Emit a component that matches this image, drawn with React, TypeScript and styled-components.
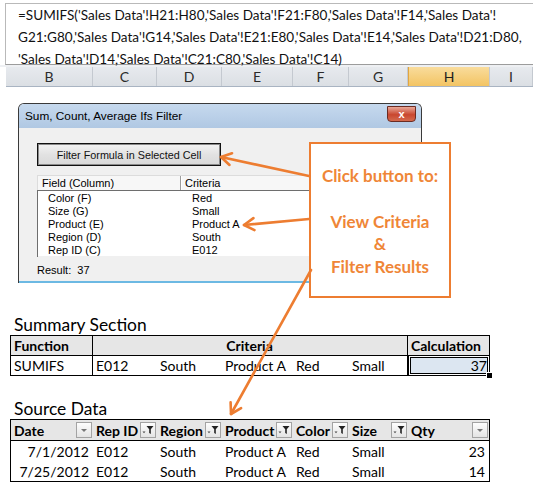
import React from "react";
import styled, { createGlobalStyle } from "styled-components";

const GlobalStyle = createGlobalStyle`
  html, body { margin: 0; padding: 0; background: #fff; }
  body { width: 533px; height: 488px; overflow: hidden; }
  * { box-sizing: border-box; }
`;

const SHEET_FONT = `Lato, "Liberation Sans", sans-serif`;
const UI_FONT = `"Liberation Sans", Arial, sans-serif`;
const ORANGE = "#ed7d31";

const Page = styled.div`
  position: relative;
  width: 533px;
  height: 488px;
  overflow: hidden;
  background: #fff;
  font-family: ${SHEET_FONT};
  color: #000;
`;

const FormulaBar = styled.div`
  margin: 3px 0 0 5px;
  height: 62px;
  border-top: 1px solid #b9b9b9;
  border-left: 1px solid #b9b9b9;
  border-bottom: 1px solid #9c9c9c;
  padding: 0 0 0 12px;
  font-size: 13.55px;
  line-height: 22px;
  color: #111;
`;

const FormulaLine = styled.div`
  white-space: nowrap;
`;

const Gap = styled.div`
  height: 2px;
  background: #eef0f3;
`;

const ColHeaderRow = styled.div`
  display: grid;
  grid-template-columns: 87px 64px 65px 71px 56px 59px 82px 1fr;
  margin-left: 6px;
  height: 20px;
  border-bottom: 1px solid #a9b4c2;
`;

const ColHeader = styled.div<{ $active?: boolean }>`
  display: flex;
  align-items: center;
  justify-content: center;
  font-size: 14px;
  color: ${(p) => (p.$active ? "#1e1e1e" : "#2b2b2b")};
  background: ${(p) =>
    p.$active
      ? "linear-gradient(#f9dc9c, #f3c463)"
      : "linear-gradient(#e7eaee, #dbdfe4)"};
  border-right: 1px solid #c4c9d0;
  border-left: ${(p) => (p.$active ? "1px solid #e2a640" : "none")};
`;

const Dialog = styled.div`
  margin: 16px 0 0 18px;
  width: 404px;
  height: 180px;
  border: 1px solid #3a3a3a;
  border-bottom: none;
  border-radius: 6px 6px 0 0;
  background: #f0f0f0;
  display: flex;
  flex-direction: column;
  overflow: hidden;
  font-family: ${UI_FONT};
`;

const TitleBar = styled.div`
  height: 24px;
  flex: none;
  display: flex;
  align-items: center;
  justify-content: space-between;
  padding: 0 5px 0 6px;
  background: linear-gradient(#c6d9ee, #b0c8e3);
  font-size: 11.8px;
  color: #000;
`;

const CloseButton = styled.div`
  width: 29px;
  height: 16px;
  margin-top: -4px;
  border: 1px solid #6b2b22;
  border-radius: 0 0 4px 4px;
  background: linear-gradient(#e9a898, #c9472f 55%, #d46a4e);
  color: #fff;
  font-size: 11px;
  font-weight: 700;
  display: flex;
  align-items: center;
  justify-content: center;
  line-height: 1;
`;

const DialogBody = styled.div`
  flex: 1;
  display: flex;
  flex-direction: column;
  align-items: flex-start;
  padding: 15px 0 0 18px;
  border-bottom: 2px solid #6cb9e3;
`;

const ActionButton = styled.div`
  width: 184px;
  height: 23px;
  border: 1px solid #111;
  box-shadow: inset 0 0 0 1px #8a8a8a;
  background: linear-gradient(#f4f4f4, #e2e2e2 50%, #d9d9d9);
  font-size: 10.8px;
  display: flex;
  align-items: center;
  justify-content: center;
  color: #111;
`;

const ListView = styled.div`
  margin-top: 9px;
  width: 377px;
  height: 81px;
  background: #fff;
  display: flex;
  flex-direction: column;
  font-size: 11px;
`;

const ListHeader = styled.div`
  height: 15px;
  display: grid;
  grid-template-columns: 143px 1fr;
  background: #f7f7f7;
  border-top: 1px solid #dcdcdc;
  border-left: 1px solid #dcdcdc;
`;

const ListHeaderCell = styled.div`
  padding-left: 4px;
  line-height: 14px;
  border-right: 1px solid #9c9c9c;
  box-shadow: 1px 0 0 #fff;
  &:last-child { border-right: none; box-shadow: none; }
`;

const ListRows = styled.div`
  flex: 1;
  border-top: 1px solid #6e6e6e;
  border-left: 1px solid #6e6e6e;
  padding-top: 1px;
`;

const ListRow = styled.div`
  display: grid;
  grid-template-columns: 144px 1fr;
  height: 13px;
  line-height: 13px;
  padding-left: 10px;
`;

const ResultLine = styled.div`
  margin-top: 8px;
  font-size: 11px;
  white-space: pre;
`;

const Section = styled.div<{ $top: number }>`
  margin: ${(p) => p.$top}px 0 0 10px;
  width: 480px;
`;

const SectionTitle = styled.div`
  height: 21px;
  line-height: 21px;
  font-size: 17.4px;
  padding-left: 4px;
`;

const Table = styled.div`
  border: 1px solid #000;
  font-size: 14px;
`;

const SummaryRow = styled.div<{ $head?: boolean }>`
  display: grid;
  grid-template-columns: 82px 315px 1fr;
  height: ${(p) => (p.$head ? 20 : 19)}px;
  background: ${(p) => (p.$head ? "#e6e6e6" : "#fff")};
  border-bottom: ${(p) => (p.$head ? "1px solid #000" : "none")};
  font-weight: ${(p) => (p.$head ? 700 : 400)};
`;

const Cell = styled.div<{ $align?: "left" | "center" | "right"; $divider?: boolean }>`
  display: flex;
  align-items: center;
  padding: 0 4px 0 3px;
  white-space: nowrap;
  justify-content: ${(p) =>
    p.$align === "center" ? "center" : p.$align === "right" ? "flex-end" : "flex-start"};
  border-right: ${(p) => (p.$divider ? "1px solid #000" : "none")};
`;

const CriteriaCells = styled.div`
  display: grid;
  grid-template-columns: 64px 65px 71px 56px 59px;
  border-right: 1px solid #000;
`;

const ActiveCell = styled.div`
  position: relative;
  display: flex;
  align-items: center;
  justify-content: flex-end;
  padding-right: 3px;
  background: #dce6f1;
  box-shadow: inset 0 0 0 1px #000, inset 0 0 0 2px #fff, inset 0 0 0 3px #000;
  margin: -1px -1px -1px 0;
  &::after {
    content: "";
    position: absolute;
    right: -3px;
    bottom: -3px;
    width: 5px;
    height: 5px;
    background: #000;
    border: 1px solid #fff;
  }
`;

const DataRow = styled.div<{ $head?: boolean }>`
  display: grid;
  grid-template-columns: 82px 64px 65px 71px 56px 59px 1fr;
  height: ${(p) => (p.$head ? 21 : 20)}px;
  background: ${(p) => (p.$head ? "#e6e6e6" : "#fff")};
  border-bottom: ${(p) => (p.$head ? "1px solid #000" : "none")};
  font-weight: ${(p) => (p.$head ? 700 : 400)};
`;

const HeadCell = styled.div`
  display: flex;
  align-items: center;
  justify-content: space-between;
  padding: 0 1px 0 3px;
  white-space: nowrap;
`;

const FilterBtn = styled.div`
  width: 16px;
  height: 16px;
  flex: none;
  border: 1px solid #a3a3a3;
  background: linear-gradient(#fdfdfd, #e4e4e4);
  display: flex;
  align-items: center;
  justify-content: center;
`;

const Callout = styled.div`
  position: absolute;
  left: 309px;
  top: 142px;
  width: 142px;
  height: 156px;
  border: 2px solid ${ORANGE};
  background: #fff;
  padding-top: 21px;
  text-align: center;
  color: #ef8637;
  font-family: ${SHEET_FONT};
  font-weight: 700;
  font-size: 17px;
  line-height: 22.8px;
  z-index: 2;
`;

const CalloutLine = styled.div`
  white-space: nowrap;
  min-height: 22.8px;
`;

const ArrowLayer = styled.svg`
  position: absolute;
  left: 0;
  top: 0;
  pointer-events: none;
  z-index: 3;
`;

const DropIcon = () => (
  <svg width="8" height="5" viewBox="0 0 8 5">
    <path d="M1 1 L4 4 L7 1 Z" fill="#777" />
  </svg>
);

const FunnelIcon = () => (
  <svg width="12" height="10" viewBox="0 0 12 10">
    <path d="M0.5 6.5 L3.5 6.5 L2 8.3 Z" fill="#444" />
    <path d="M4.5 1 L11.5 1 L8.8 4.3 L8.8 9 L7.2 8 L7.2 4.3 Z" fill="#222" />
  </svg>
);

const arrows = [
  { x1: 309, y1: 176, x2: 221, y2: 157 },
  { x1: 309, y1: 219, x2: 244, y2: 225 },
  { x1: 311, y1: 270, x2: 231, y2: 414 },
];

function head(a: { x1: number; y1: number; x2: number; y2: number }) {
  const dx = a.x2 - a.x1;
  const dy = a.y2 - a.y1;
  const len = Math.hypot(dx, dy);
  const ux = dx / len;
  const uy = dy / len;
  const L = 10;
  const W = 6;
  const bx = a.x2 - ux * L;
  const by = a.y2 - uy * L;
  return `${bx - uy * W},${by + ux * W} ${a.x2},${a.y2} ${bx + uy * W},${by - ux * W}`;
}

const listRows = [
  ["Color (F)", "Red"],
  ["Size (G)", "Small"],
  ["Product (E)", "Product A"],
  ["Region (D)", "South"],
  ["Rep ID (C)", "E012"],
];

const cols = ["B", "C", "D", "E", "F", "G", "H", "I"];

const dataHead: { label: string; icon: "drop" | "filter" }[] = [
  { label: "Date", icon: "drop" },
  { label: "Rep ID", icon: "filter" },
  { label: "Region", icon: "filter" },
  { label: "Product", icon: "filter" },
  { label: "Color", icon: "filter" },
  { label: "Size", icon: "filter" },
  { label: "Qty", icon: "drop" },
];

const dataRows = [
  ["7/1/2012", "E012", "South", "Product A", "Red", "Small", "23"],
  ["7/25/2012", "E012", "South", "Product A", "Red", "Small", "14"],
];

export default function App() {
  return (
    <Page>
      <GlobalStyle />
      <FormulaBar>
        <FormulaLine>=SUMIFS('Sales Data'!H21:H80,'Sales Data'!F21:F80,'Sales Data'!F14,'Sales Data'!</FormulaLine>
        <FormulaLine>G21:G80,'Sales Data'!G14,'Sales Data'!E21:E80,'Sales Data'!E14,'Sales Data'!D21:D80,</FormulaLine>
        <FormulaLine>'Sales Data'!D14,'Sales Data'!C21:C80,'Sales Data'!C14)</FormulaLine>
      </FormulaBar>
      <Gap />
      <ColHeaderRow>
        {cols.map((c) => (
          <ColHeader key={c} $active={c === "H"}>
            {c}
          </ColHeader>
        ))}
      </ColHeaderRow>

      <Dialog>
        <TitleBar>
          <span>Sum, Count, Average Ifs Filter</span>
          <CloseButton>x</CloseButton>
        </TitleBar>
        <DialogBody>
          <ActionButton>Filter Formula in Selected Cell</ActionButton>
          <ListView>
            <ListHeader>
              <ListHeaderCell>Field (Column)</ListHeaderCell>
              <ListHeaderCell>Criteria</ListHeaderCell>
            </ListHeader>
            <ListRows>
              {listRows.map(([f, c]) => (
                <ListRow key={f}>
                  <span>{f}</span>
                  <span>{c}</span>
                </ListRow>
              ))}
            </ListRows>
          </ListView>
          <ResultLine>Result:  37</ResultLine>
        </DialogBody>
      </Dialog>

      <Section $top={31}>
        <SectionTitle>Summary Section</SectionTitle>
        <Table>
          <SummaryRow $head>
            <Cell $divider>Function</Cell>
            <Cell $divider $align="center">Criteria</Cell>
            <Cell>Calculation</Cell>
          </SummaryRow>
          <SummaryRow>
            <Cell $divider>SUMIFS</Cell>
            <CriteriaCells>
              {["E012", "South", "Product A", "Red", "Small"].map((v) => (
                <Cell key={v}>{v}</Cell>
              ))}
            </CriteriaCells>
            <ActiveCell>37</ActiveCell>
          </SummaryRow>
        </Table>
      </Section>

      <Section $top={22}>
        <SectionTitle>Source Data</SectionTitle>
        <Table>
          <DataRow $head>
            {dataHead.map((h) => (
              <HeadCell key={h.label}>
                <span>{h.label}</span>
                <FilterBtn>{h.icon === "drop" ? <DropIcon /> : <FunnelIcon />}</FilterBtn>
              </HeadCell>
            ))}
          </DataRow>
          {dataRows.map((r) => (
            <DataRow key={r[0]}>
              {r.map((v, i) => (
                <Cell key={i} $align={i === 0 || i === 6 ? "right" : "left"}>
                  {v}
                </Cell>
              ))}
            </DataRow>
          ))}
        </Table>
      </Section>

      <Callout>
        <CalloutLine>Click button to:</CalloutLine>
        <CalloutLine />
        <CalloutLine>View Criteria</CalloutLine>
        <CalloutLine>&amp;</CalloutLine>
        <CalloutLine>Filter Results</CalloutLine>
      </Callout>

      <ArrowLayer width="533" height="488" viewBox="0 0 533 488">
        {arrows.map((a, i) => (
          <g key={i} stroke={ORANGE} strokeWidth="2.6" fill="none" strokeLinecap="round" strokeLinejoin="round">
            <line x1={a.x1} y1={a.y1} x2={a.x2} y2={a.y2} />
            <polyline points={head(a)} />
          </g>
        ))}
      </ArrowLayer>
    </Page>
  );
}
